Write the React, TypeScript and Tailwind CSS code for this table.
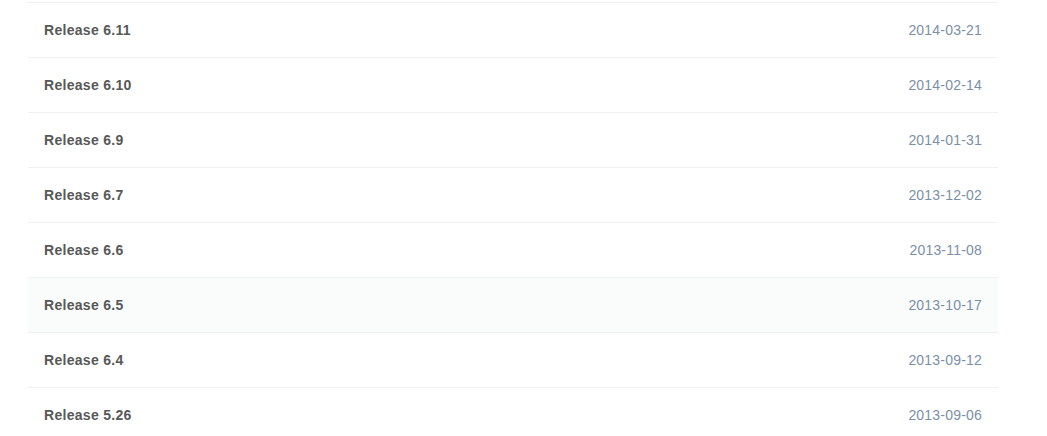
import React from 'react';

const releases = [
  { name: 'Release 6.11', date: '2014-03-21' },
  { name: 'Release 6.10', date: '2014-02-14' },
  { name: 'Release 6.9', date: '2014-01-31' },
  { name: 'Release 6.7', date: '2013-12-02' },
  { name: 'Release 6.6', date: '2013-11-08' },
  { name: 'Release 6.5', date: '2013-10-17', hover: true },
  { name: 'Release 6.4', date: '2013-09-12' },
  { name: 'Release 5.26', date: '2013-09-06' },
];

export default function App() {
  return (
    <div className="h-[436px] w-[1047px] overflow-hidden bg-white pt-[2px] font-['Liberation_Sans',Arial,sans-serif]">
      <div className="ml-[28px] w-[970px]">
        {releases.map((r) => (
          <div
            key={r.name}
            className={`flex h-[55px] items-center justify-between border-t border-[#f0f1f1] px-4 pt-[1px] ${r.hover ? 'bg-[#fafbfb]' : 'bg-white'}`}
          >
            <span className="text-[14px] font-bold tracking-[0.3px] text-[#585858]">{r.name}</span>
            <span className="text-[14px] tracking-[0.2px] text-[#7b8fa6]">{r.date}</span>
          </div>
        ))}
      </div>
    </div>
  );
}
